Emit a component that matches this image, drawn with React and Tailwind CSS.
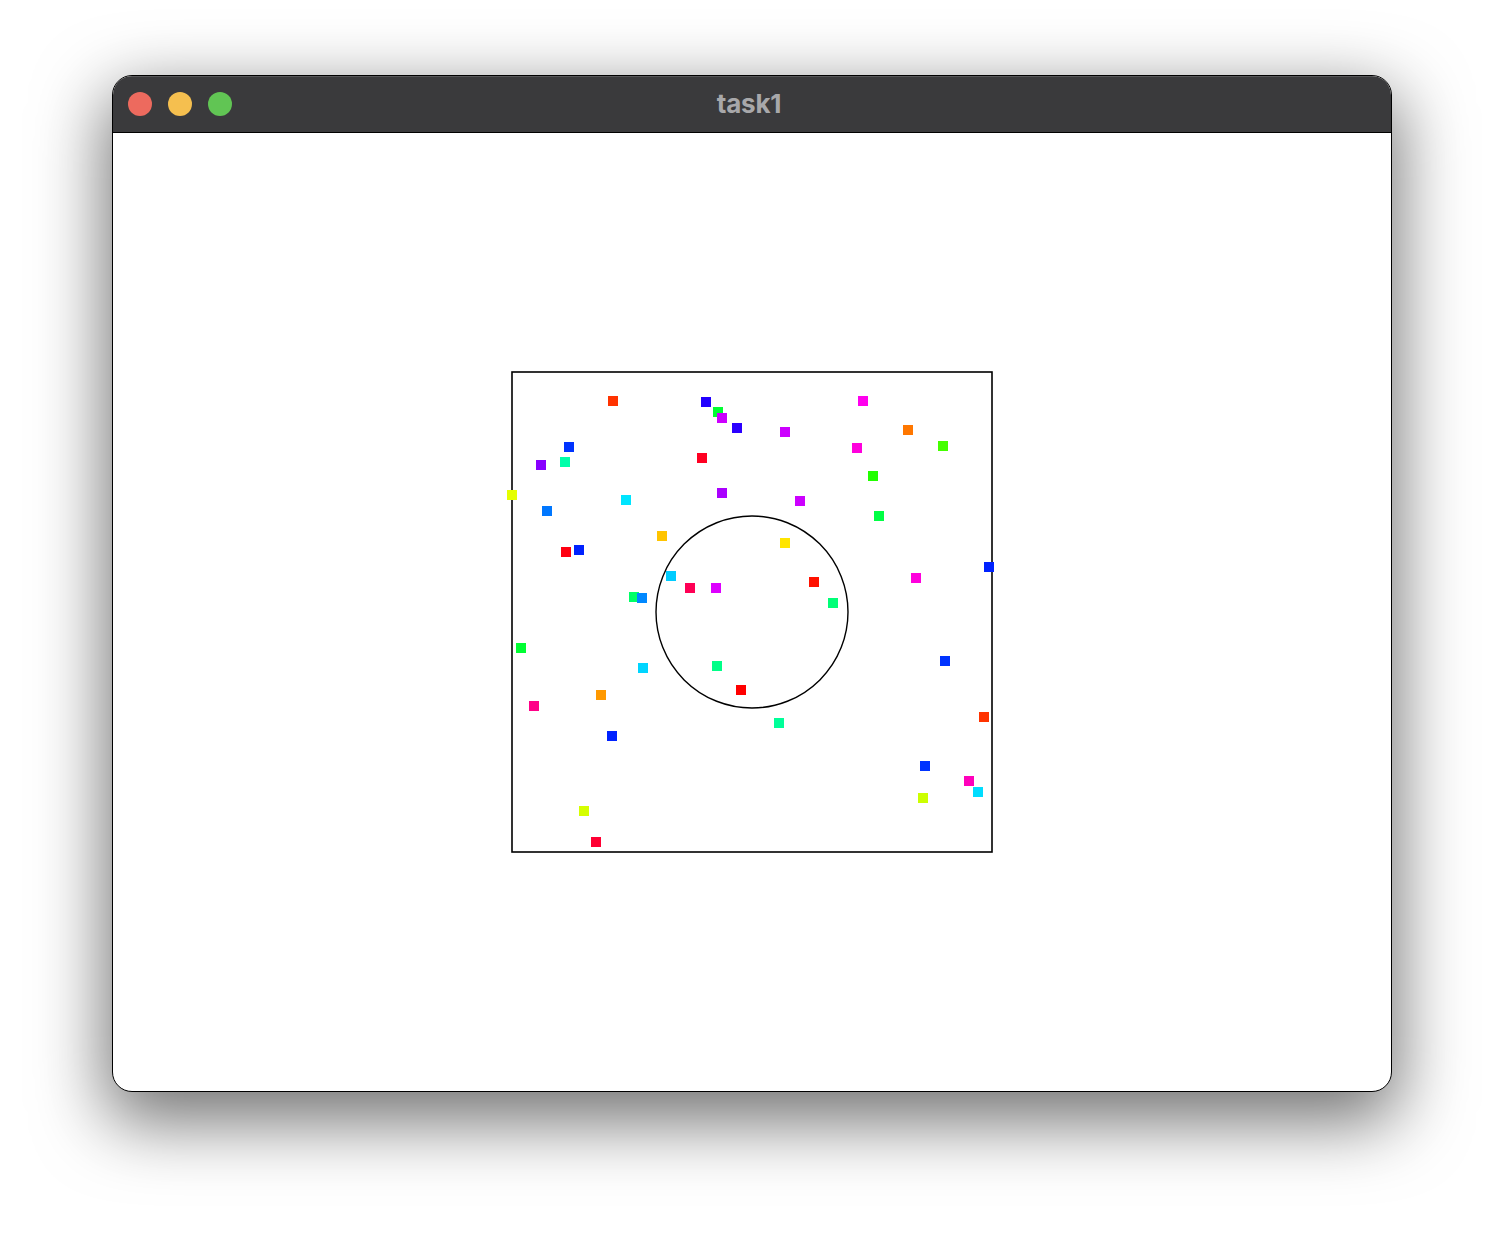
import React from "react";

const dots = [
  [608, 396, "#ff3300"],
  [701, 397, "#2200ff"],
  [713, 407, "#00ff33"],
  [717, 413, "#cc00ff"],
  [732, 423, "#2b00ff"],
  [564, 442, "#0033ff"],
  [560, 457, "#00ffaa"],
  [536, 460, "#8800ff"],
  [697, 453, "#ff0022"],
  [507, 490, "#e5ff00"],
  [621, 495, "#00e5ff"],
  [717, 488, "#aa00ff"],
  [542, 506, "#0077ff"],
  [657, 531, "#ffc400"],
  [561, 547, "#ff0011"],
  [574, 545, "#0022ff"],
  [666, 571, "#00ccff"],
  [685, 583, "#ff0055"],
  [711, 583, "#dd00ff"],
  [629, 592, "#00ff66"],
  [637, 593, "#0088ff"],
  [858, 396, "#ff00ee"],
  [780, 427, "#cc00ff"],
  [903, 425, "#ff7700"],
  [852, 443, "#ff00dd"],
  [938, 441, "#44ff00"],
  [868, 471, "#22ff00"],
  [795, 496, "#cc00ff"],
  [874, 511, "#00ff44"],
  [780, 538, "#ffe500"],
  [984, 562, "#0022ff"],
  [911, 573, "#ff00dd"],
  [809, 577, "#ff1100"],
  [828, 598, "#00ff77"],
  [516, 643, "#00ff33"],
  [638, 663, "#00d5ff"],
  [712, 661, "#00ff88"],
  [736, 685, "#ff0000"],
  [596, 690, "#ff9900"],
  [529, 701, "#ff0088"],
  [607, 731, "#0022ff"],
  [579, 806, "#d5ff00"],
  [591, 837, "#ff0033"],
  [940, 656, "#0033ff"],
  [979, 712, "#ff3300"],
  [774, 718, "#00ff99"],
  [920, 761, "#0033ff"],
  [964, 776, "#ff00bb"],
  [973, 787, "#00ddff"],
  [918, 793, "#ccff00"],
];

export default function App() {
  return (
    <div className="w-[1504px] h-[1240px] bg-white pl-[112px] pt-[75px] overflow-hidden">
      <div className="w-[1280px] h-[1017px] rounded-[20px] border border-black bg-white overflow-hidden flex flex-col shadow-[0_24px_70px_6px_rgba(0,0,0,0.55)]">
        <div className="h-[57px] shrink-0 bg-[#3a3a3c] border-b border-black relative flex items-center pl-[15px] gap-4 shadow-[inset_0_1px_0_rgba(255,255,255,0.15)]">
          <div className="w-6 h-6 rounded-full bg-[#ed6a5e]"></div>
          <div className="w-6 h-6 rounded-full bg-[#f5bf4f]"></div>
          <div className="w-6 h-6 rounded-full bg-[#61c554]"></div>
          <div className="absolute inset-0 flex items-center justify-center pr-[6px] pb-[1px] text-[26px] font-bold text-[#a8a8aa] font-['Inter','Liberation_Sans',sans-serif] tracking-[-0.2px]">
            task1
          </div>
        </div>
        <div className="flex-1">
          <svg width="1278" height="958" viewBox="113 133 1278 958" className="block">
            <rect x="512" y="372" width="480" height="480" fill="none" stroke="#000" strokeWidth="1.6" />
            <circle cx="752" cy="612" r="96" fill="none" stroke="#000" strokeWidth="1.4" />
            {dots.map(([x, y, c], i) => (
              <rect key={i} x={x} y={y} width="10" height="10" fill={c} />
            ))}
          </svg>
        </div>
      </div>
    </div>
  );
}
